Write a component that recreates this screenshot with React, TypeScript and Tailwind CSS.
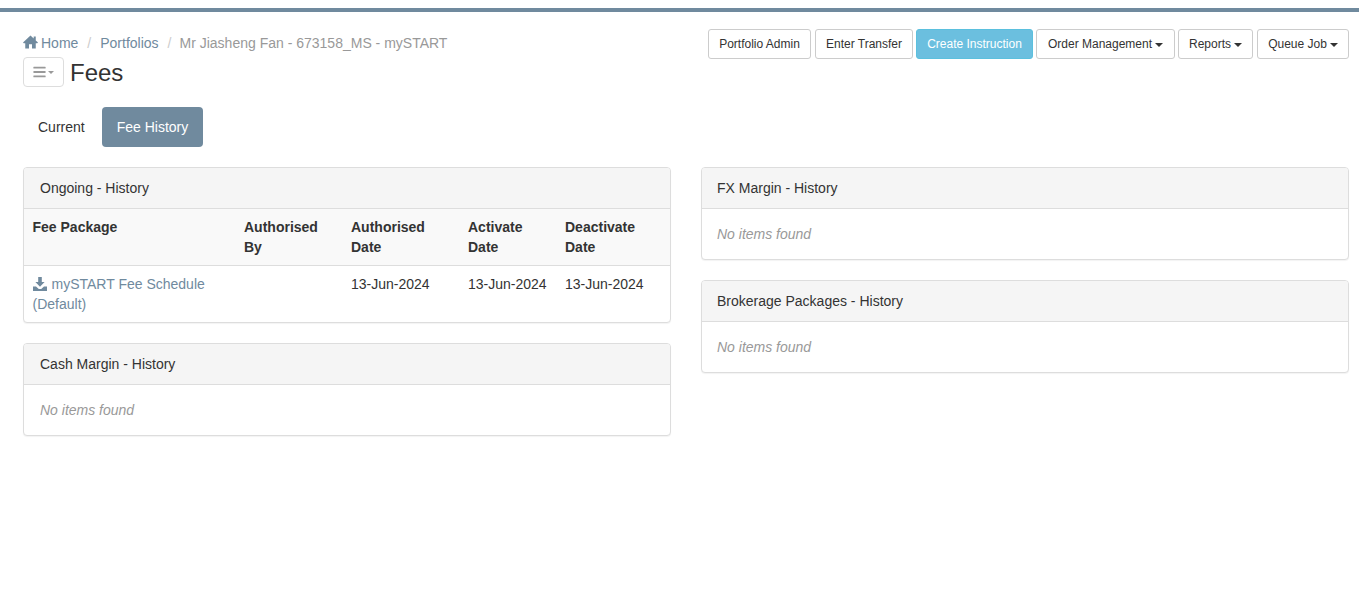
import React from 'react';
import { FaBars } from 'react-icons/fa';

const Caret = ({ className = 'border-t-[#333]' }: { className?: string }) => (
  <span className={`inline-block w-0 h-0 ml-[3px] align-middle border-x-[4px] border-x-transparent border-t-[4px] ${className}`} />
);

// glyphicon-home look-alike
const HomeIcon = () => (
  <svg viewBox="0 0 16 14" className="w-[15px] h-[14px] mr-[3px] mb-[2px] fill-[#708a9e]">
    <path d="M8 0 L0 7.6 L0.8 8.4 H2.4 V14 H6.4 V9.4 H9.6 V14 H13.6 V8.4 H15.2 L16 7.6 L13.6 5.3 V1 H11.4 V3.2 Z" />
  </svg>
);

// glyphicon-download-alt look-alike
const DownloadIcon = () => (
  <svg viewBox="0 0 14 14" className="inline-block w-[14px] h-[14px] mb-[3px] mr-[5px] fill-[#708a9e]">
    <path d="M5.2 0 H8.8 V5 H11.6 L7 9.8 L2.4 5 H5.2 Z" />
    <path d="M0 9.6 H3 L5.8 12 H8.2 L11 9.6 H14 V14 H0 Z" />
  </svg>
);

function ActionButton({ label, caret, width }: { label: string; caret?: boolean; width: string }) {
  return (
    <button className={`${width} h-[30px] bg-white border border-[#ccc] rounded-[3px] text-xs text-[#333] text-center whitespace-nowrap`}>
      {label}
      {caret && <Caret />}
    </button>
  );
}

function Panel({ title, inset = 'pl-[15px]', children }: { title: string; inset?: string; children: React.ReactNode }) {
  return (
    <div className="bg-white border border-[#ddd] rounded-[4px] shadow-[0_1px_1px_rgba(0,0,0,0.05)] overflow-hidden">
      <div className={`h-[41px] ${inset} py-[10px] bg-[#f5f5f5] border-b border-[#ddd] text-[#333]`}>{title}</div>
      {children}
    </div>
  );
}

const Empty = ({ inset = 'pl-[15px]' }: { inset?: string }) => (
  <div className={`${inset} py-[15px] h-[50px] italic text-[#999]`}>No items found</div>
);

export default function App() {
  return (
    <div className="min-h-[589px] bg-white text-sm leading-5 text-[#333] font-['Liberation_Sans',Arial,sans-serif] pt-[8px]">
      <div className="h-[4px] bg-[#708a9e]" />

      <div className="pl-[23px] pr-[10px] pt-[17px]">
        <div className="flex justify-between items-start">
          <div>
            <div className="flex items-center h-[28px] text-[#999]">
              <HomeIcon />
              <span className="text-[#708a9e]">Home</span>
              <span className="text-[#ccc] px-[9px]">/</span>
              <span className="text-[#708a9e]">Portfolios</span>
              <span className="text-[#ccc] pl-[9px] pr-[8px]">/</span>
              <span>Mr Jiasheng Fan - 673158_MS - mySTART</span>
            </div>
            <div className="flex items-center gap-[6px]">
              <button className="w-[41px] h-[30px] bg-white border border-[#ddd] rounded-[4px] flex items-center justify-center text-[#999]">
                <FaBars className="w-[13px] h-[14px]" />
                <Caret className="border-t-[#999] !ml-[2px] !border-x-[3px] !border-t-[3px]" />
              </button>
              <h1 className="text-2xl h-[30px] leading-[32px] font-normal text-[#333]">Fees</h1>
            </div>
          </div>

          <div className="flex gap-[3px]">
            <ActionButton label="Portfolio Admin" width="w-[103px]" />
            <ActionButton label="Enter Transfer" width="w-[98px] ml-px" />
            <button className="w-[117px] h-[30px] bg-[#6bbfdf] border border-[#5bc0de] rounded-[3px] text-xs text-white whitespace-nowrap">Create Instruction</button>
            <ActionButton label="Order Management" caret width="w-[139px]" />
            <ActionButton label="Reports" caret width="w-[75px]" />
            <ActionButton label="Queue Job" caret width="w-[92px] ml-px" />
          </div>
        </div>

        <div className="flex gap-[2px] mt-[20px]">
          <div className="h-[40px] px-[15px] py-[10px] rounded-[4px] text-[#333]">Current</div>
          <div className="h-[40px] px-[15px] py-[10px] rounded-[4px] bg-[#708a9e] text-white">Fee History</div>
        </div>

        <div className="grid grid-cols-2 gap-[30px] mt-[20px]">
          <div className="flex flex-col gap-[20px]">
            <Panel title="Ongoing - History" inset="pl-[16px]">
              <table className="w-full table-fixed border-collapse">
                <colgroup>
                  <col className="w-[211px]" />
                  <col className="w-[107px]" />
                  <col className="w-[117px]" />
                  <col className="w-[97px]" />
                  <col />
                </colgroup>
                <thead>
                  <tr className="bg-[#f9f9f9] border-b border-[#ddd] align-top text-left">
                    <th className="pl-[8.5px] pr-[9px] py-[8px] font-bold">Fee Package</th>
                    <th className="px-[9px] py-[8px] font-bold">Authorised By</th>
                    <th className="px-[9px] py-[8px] font-bold">Authorised Date</th>
                    <th className="px-[9px] py-[8px] font-bold">Activate Date</th>
                    <th className="px-[9px] py-[8px] font-bold">Deactivate Date</th>
                  </tr>
                </thead>
                <tbody>
                  <tr className="align-top">
                    <td className="pl-[8.5px] pr-[9px] py-[8px] text-[#708a9e]">
                      <DownloadIcon />
                      mySTART Fee Schedule (Default)
                    </td>
                    <td className="px-[9px] py-[8px]" />
                    <td className="px-[9px] py-[8px]">13-Jun-2024</td>
                    <td className="px-[9px] py-[8px]">13-Jun-2024</td>
                    <td className="px-[9px] py-[8px]">13-Jun-2024</td>
                  </tr>
                </tbody>
              </table>
            </Panel>
            <Panel title="Cash Margin - History" inset="pl-[16px]"><Empty inset="pl-[16px]" /></Panel>
          </div>

          <div className="flex flex-col gap-[20px]">
            <Panel title="FX Margin - History"><Empty /></Panel>
            <Panel title="Brokerage Packages - History"><Empty /></Panel>
          </div>
        </div>
      </div>
    </div>
  );
}
